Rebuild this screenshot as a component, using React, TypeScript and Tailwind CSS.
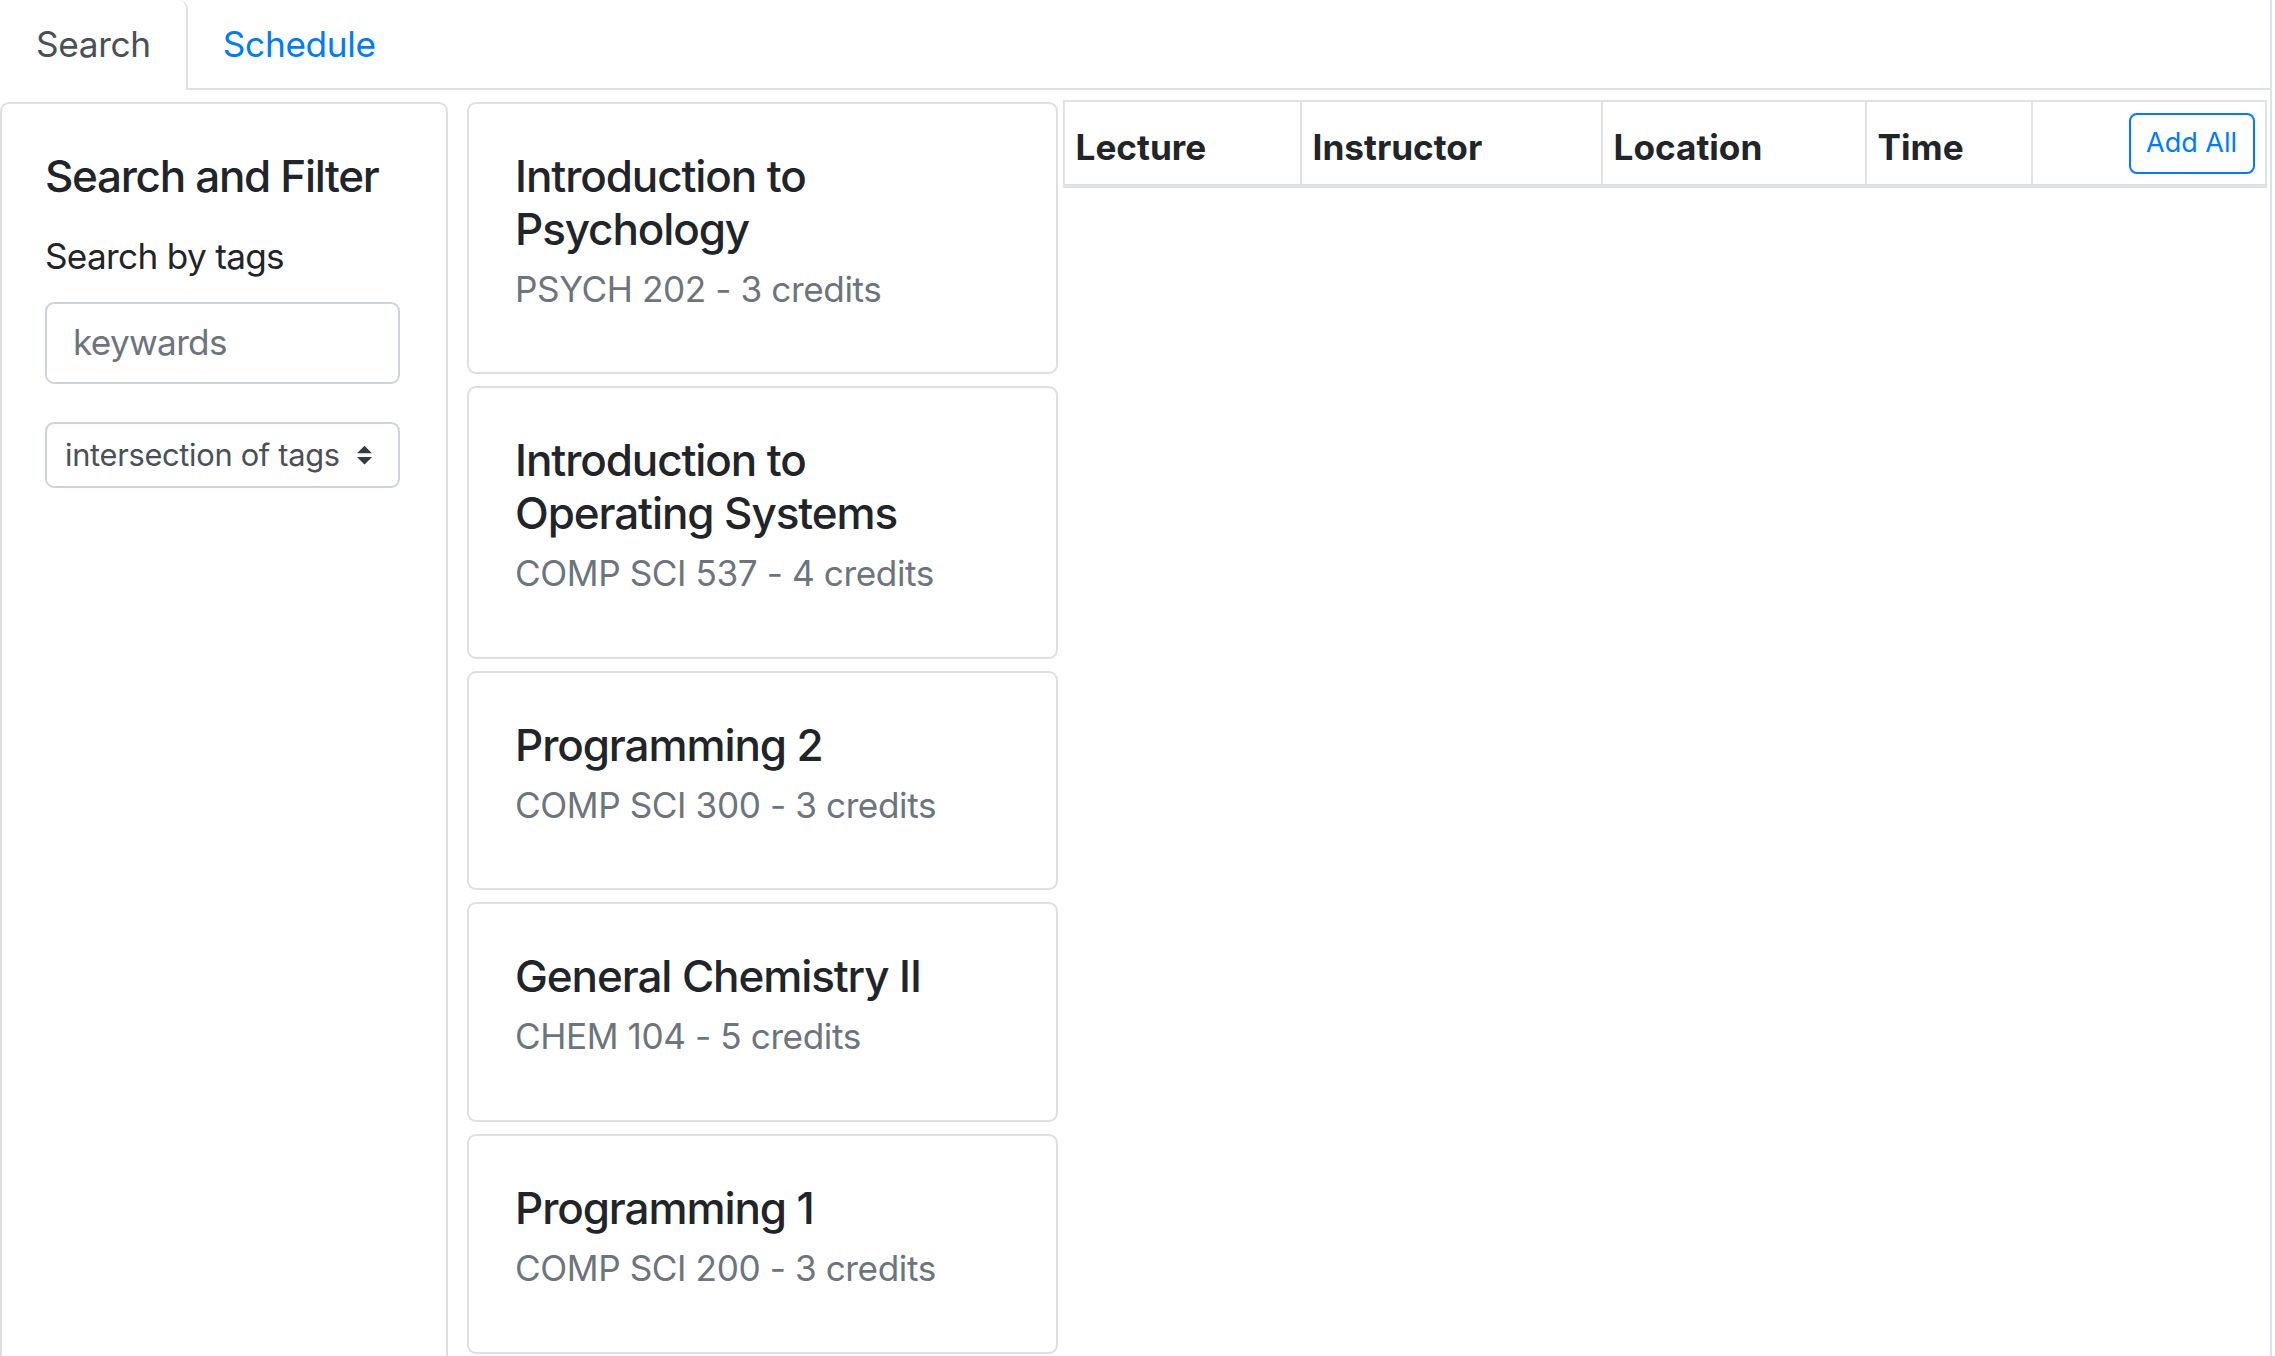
type Course = {
  title: string[];
  sub: string;
};

const courses: Course[] = [
  { title: ["Introduction to", "Psychology"], sub: "PSYCH 202 - 3 credits" },
  { title: ["Introduction to", "Operating Systems"], sub: "COMP SCI 537 - 4 credits" },
  { title: ["Programming 2"], sub: "COMP SCI 300 - 3 credits" },
  { title: ["General Chemistry II"], sub: "CHEM 104 - 5 credits" },
  { title: ["Programming 1"], sub: "COMP SCI 200 - 3 credits" },
];

function SelectArrows() {
  return (
    <svg viewBox="0 0 4 5" className="w-[15px] h-[22px]" fill="#343a40">
      <path d="M2 0L0 2h4zm0 5L0 3h4z" />
    </svg>
  );
}

function CourseCard({ course }: { course: Course }) {
  return (
    <div className="mb-[12px] rounded-[9px] border-2 border-[#dfdfdf] bg-white pl-[46px] pr-[44px] pt-[46px] pb-[57px]">
      <h5 className="text-[44px] leading-[52.8px] font-medium tracking-[-0.025em] text-[#212529]">
        {course.title.map((line) => (
          <div key={line}>{line}</div>
        ))}
      </h5>
      <div className="mt-[7px] text-[35.2px] leading-[52.8px] tracking-[-0.012em] text-[#6c757d]">
        {course.sub}
      </div>
    </div>
  );
}

const columns = [
  { label: "Lecture", width: "w-[237px]" },
  { label: "Instructor", width: "w-[301px]" },
  { label: "Location", width: "w-[264px]" },
  { label: "Time", width: "w-[166px]" },
];

export default function App() {
  return (
    <div className="w-[2272px] h-[1356px] overflow-hidden border-r-2 border-[#dee2e6] bg-white font-['Inter','Noto_Sans',sans-serif] text-[#212529]">
      {/* Tabs */}
      <div className="flex h-[90px] border-b-2 border-[#dee2e6] tracking-[-0.02em]">
        <div className="-mb-[2px] h-[90px] rounded-tr-[9px] border-r-2 border-[#dee2e6] bg-white pl-[36px] pr-[35px] pt-[17.6px] text-[35.2px] leading-[52.8px] text-[#495057]">
          Search
        </div>
        <div className="pl-[35px] pr-[36px] pt-[17.6px] text-[35.2px] leading-[52.8px] text-[#007bff]">
          Schedule
        </div>
      </div>

      <div className="flex items-start">
        {/* Search and filter */}
        <div className="mt-[12px] h-[1300px] w-[448px] shrink-0 rounded-[9px] border-2 border-[#dfdfdf] px-[43px] pt-[46px]">
          <h5 className="text-[44px] leading-[52.8px] font-medium tracking-[-0.03em]">Search and Filter</h5>
          <div className="mt-[27px] text-[35.2px] leading-[52.8px] tracking-[-0.02em]">Search by tags</div>
          <div className="mt-[19px] flex h-[82px] w-[355px] items-center rounded-[9px] border-2 border-[#ced4da] px-[26px] text-[35.2px] tracking-[-0.02em] text-[#6c757d]">
            keywards
          </div>
          <div className="mt-[38px] flex h-[66px] w-[355px] items-center justify-between rounded-[9px] border-2 border-[#ced4da] pl-[18px] pr-[26px] text-[30.8px] tracking-[-0.01em] text-[#495057]">
            <span>intersection of tags</span>
            <SelectArrows />
          </div>
        </div>

        {/* Course cards */}
        <div className="ml-[19px] mt-[12px] w-[591px] shrink-0">
          {courses.map((c) => (
            <CourseCard key={c.sub} course={c} />
          ))}
        </div>

        {/* Schedule table */}
        <div className="ml-[5px] mt-[10px] flex w-[1204px] shrink-0 border-2 border-b-[4px] border-[#dee2e6]">
          {columns.map((col) => (
            <div
              key={col.label}
              className={`${col.width} flex h-[82px] items-end border-r-2 border-[#dee2e6] px-[10.5px] pb-[10.5px] text-[35.2px] leading-[52.8px] font-bold`}
            >
              {col.label}
            </div>
          ))}
          <div className="flex h-[82px] flex-1 items-start justify-end p-[10.5px]">
            <button className="h-[61px] w-[126px] rounded-[8px] border-2 border-[#007bff] text-[27px] text-[#007bff]">
              Add All
            </button>
          </div>
        </div>
      </div>
    </div>
  );
}
